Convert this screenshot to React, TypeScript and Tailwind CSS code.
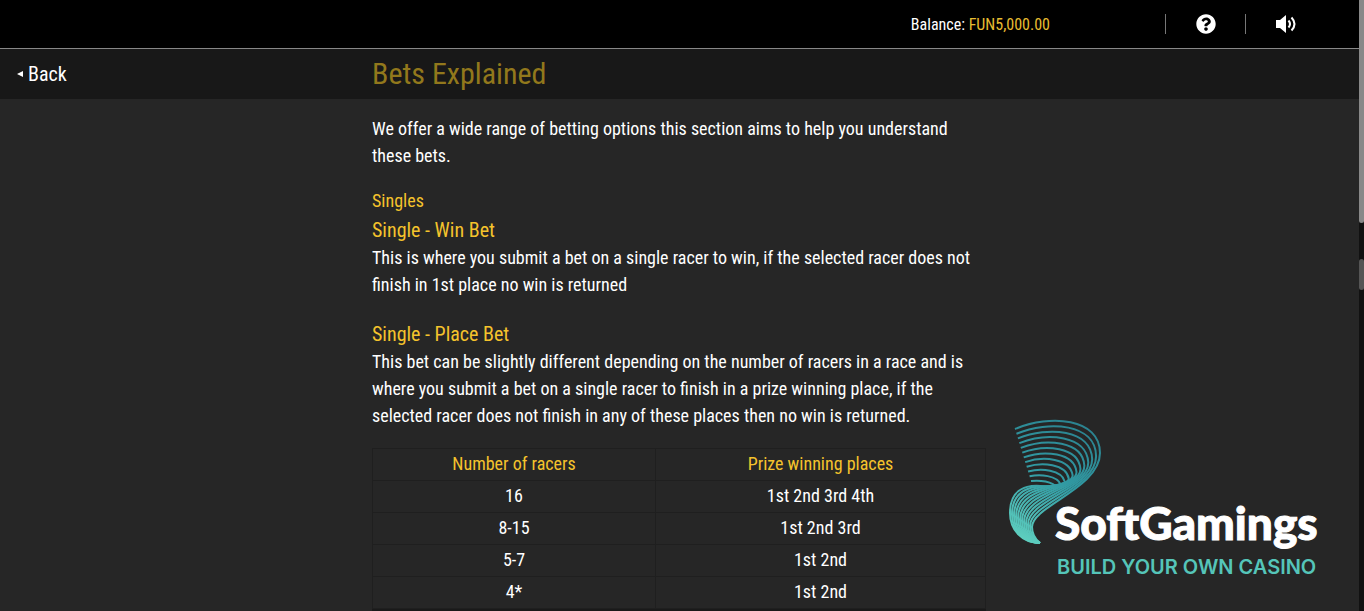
import { ReactNode } from "react"
import { FaQuestionCircle } from "react-icons/fa"

const places = [
    { racers: "16", prize: "1st 2nd 3rd 4th" },
    { racers: "8-15", prize: "1st 2nd 3rd" },
    { racers: "5-7", prize: "1st 2nd" },
    { racers: "4*", prize: "1st 2nd" },
]

// x,y pairs of the outermost and the innermost strand, the rest are blended between them
const outer = [8, 13, 43, -2, 93, 2, 93, 37, 93, 72, 25, 90, 25, 111, 25, 118, 28, 123, 33, 127]
const inner = [24, 65, 32, 64, 46, 65, 50, 72, 50, 74, 3, 56, 3, 97, 3, 114, 15, 127, 33, 127]
const STRANDS = 12

function strand(i: number) {
    const t = i / (STRANDS - 1)
    const p = outer.map((v, k) => (v + (inner[k] - v) * t).toFixed(2))
    return `M${p[0]} ${p[1]} C${p.slice(2, 8).join(" ")} C${p.slice(8, 14).join(" ")} C${p.slice(14).join(" ")}`
}

function Logo() {
    return (
        <div className="pointer-events-none absolute right-[37px] bottom-[20px] h-[175px] w-[315px]">
            <svg viewBox="0 0 96 130" className="absolute top-0 left-0 h-[130px] w-[96px]" fill="none" aria-hidden="true">
                <defs>
                    <linearGradient id="strands" x1="80" y1="0" x2="15" y2="125" gradientUnits="userSpaceOnUse">
                        <stop offset="0" stopColor="#2a7f8d" />
                        <stop offset="0.5" stopColor="#3199a2" />
                        <stop offset="1" stopColor="#5fd0c0" />
                    </linearGradient>
                </defs>
                {Array.from({ length: STRANDS }, (_, i) => (
                    <path key={i} d={strand(i)} stroke="url(#strands)" strokeWidth="2" />
                ))}
            </svg>
            <div className="absolute bottom-2 left-12 whitespace-nowrap">
                <p className="font-['Lato',sans-serif] text-[46px] leading-[56px] font-black text-white [-webkit-text-stroke:1px_white]">SoftGamings</p>
                <p className="pl-0.5 font-['Inter',sans-serif] text-[20px] leading-[32px] font-semibold text-[#55c5b9]">BUILD YOUR OWN CASINO</p>
            </div>
        </div>
    )
}

function IconButton({ label, children }: { label: string; children: ReactNode }) {
    return (
        <button type="button" aria-label={label} className="flex h-5 w-20 items-center justify-center border-l border-[#777] text-white">
            {children}
        </button>
    )
}

function Header() {
    return (
        <header className="flex h-[49px] shrink-0 items-center justify-end border-b border-[#888] bg-black pr-[34px]">
            <p className="mr-[115px] text-[16px] text-white">
                Balance: <span className="text-[#e8bd31]">FUN5,000.00</span>
            </p>
            <IconButton label="Help">
                <FaQuestionCircle size={20} />
            </IconButton>
            <IconButton label="Sound">
                <svg width="22" height="20" viewBox="0 0 22 20" fill="none" aria-hidden="true">
                    <path d="M1 6h4l6-5v18l-6-5H1z" fill="currentColor" />
                    <path d="M13.5 6.5q3 3.500 0 7M16.500 3.500q6 6.500 0 13" stroke="currentColor" strokeWidth="2" />
                </svg>
            </IconButton>
        </header>
    )
}

export default function App() {
    return (
        <div className="flex h-screen overflow-hidden bg-[#262626] font-['Roboto_Condensed','Roboto',sans-serif] text-[18px] leading-[27px] text-white">
            <div className="relative flex min-w-0 flex-1 flex-col overflow-hidden">
                <Header />
                <div className="grid h-[50px] shrink-0 grid-cols-[1fr_615px_1fr] items-center bg-[#181818]">
                    <a href="#" className="flex items-center gap-1 pl-4 text-[20px]">
                        <svg width="8" height="8" viewBox="0 0 8 8" aria-hidden="true">
                            <path d="M1 4l6-3v6z" fill="currentColor" />
                        </svg>
                        Back
                    </a>
                    <h1 className="pb-0.5 text-[30px] text-[#92781c]">Bets Explained</h1>
                </div>

                <main className="mx-auto w-[615px] pt-4">
                    <p>We offer a wide range of betting options this section aims to help you understand these bets.</p>

                    <h2 className="mt-[18px] text-[#f5c32c]">Singles</h2>
                    <h3 className="pt-0.5 text-[20px] leading-7 text-[#f5c32c]">Single - Win Bet</h3>
                    <p>This is where you submit a bet on a single racer to win, if the selected racer does not finish in 1st place no win is returned</p>

                    <h3 className="mt-5 pt-0.5 text-[20px] leading-7 text-[#f5c32c]">Single - Place Bet</h3>
                    <p>
                        This bet can be slightly different depending on the number of racers in a race and is where you submit a bet on a single racer to finish in a prize winning place, if the selected racer does not finish in any of these places then no win is returned.
                    </p>

                    <table className="mt-[19px] w-[614px] table-fixed border-collapse text-center">
                        <thead>
                            <tr className="h-8 text-[#f5c32c]">
                                <th className="w-[283px] border border-[#1f1f1f] pb-0.5 font-normal">Number of racers</th>
                                <th className="border border-[#1f1f1f] pb-0.5 font-normal">Prize winning places</th>
                            </tr>
                        </thead>
                        <tbody>
                            {places.map((row) => (
                                <tr key={row.racers} className="h-8">
                                    <td className="border border-[#1f1f1f] pb-0.5">{row.racers}</td>
                                    <td className="border border-[#1f1f1f] pb-0.5">{row.prize}</td>
                                </tr>
                            ))}
                        </tbody>
                    </table>
                    <div className="h-8 w-[614px] bg-[#1a1a1a]" />
                </main>
                <Logo />
            </div>

            <div className="flex w-[5px] shrink-0 flex-col bg-[#111]">
                <div className="h-[223px] rounded-b-sm bg-[#888]" />
                <div className="mt-9 h-[31px] rounded-sm bg-[#555]" />
            </div>
        </div>
    )
}
